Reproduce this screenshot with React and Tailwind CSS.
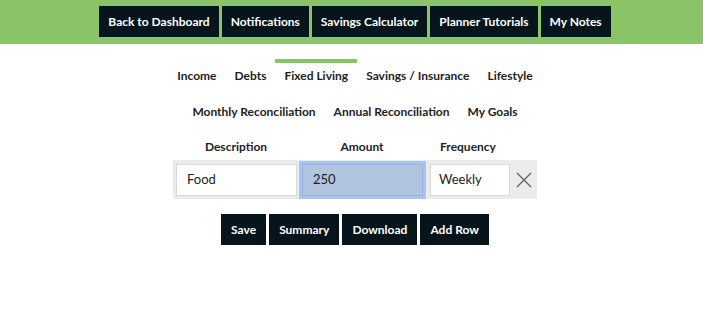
import React from "react";

const navBtn = "bg-[#06141b] text-white text-[12px] font-bold h-[31px] px-[9px] flex items-center whitespace-nowrap";
const actBtn = "bg-[#06141b] text-white text-[12px] font-bold h-[31px] px-[10px] flex items-center whitespace-nowrap";

export default function App() {
  const tabs1 = ["Income", "Debts", "Fixed Living", "Savings / Insurance", "Lifestyle"];
  const tabs2 = ["Monthly Reconciliation", "Annual Reconciliation", "My Goals"];
  const Tab = ({ label, active }) => (
    <div
      className={`px-[9px] pt-[3px] pb-[9px] h-[36px] border-t-4 text-[12px] font-bold text-[#222] leading-[20px] whitespace-nowrap ${
        active ? "border-[#8bc466]" : "border-transparent"
      }`}
    >
      {label}
    </div>
  );
  return (
    <div className="w-[703px] h-[324px] bg-white" style={{ fontFamily: "Lato, 'Open Sans', sans-serif" }}>
      <div className="bg-[#8bc466] h-[44px] flex justify-center items-start pt-[6px] gap-[3px] pl-[7px]">
        <div className={navBtn}>Back to Dashboard</div>
        <div className={navBtn}>Notifications</div>
        <div className={navBtn}>Savings Calculator</div>
        <div className={navBtn}>Planner Tutorials</div>
        <div className={navBtn}>My Notes</div>
      </div>
      <div className="flex justify-center pl-[7px]">
        <div className="flex flex-col items-center">
          <div className="flex justify-center mt-[15px]">
            {tabs1.map((t) => (
              <Tab key={t} label={t} active={t === "Fixed Living"} />
            ))}
          </div>
          <div className="flex justify-center">
            {tabs2.map((t) => (
              <Tab key={t} label={t} />
            ))}
          </div>
          <div className="w-[364px] flex mt-[4px] text-[12px] font-bold text-[#222] h-[24px] items-center">
            <div className="w-[126px] text-center">Description</div>
            <div className="w-[126px] text-center">Amount</div>
            <div className="w-[86px] text-center">Frequency</div>
          </div>
          <div className="w-[364px] h-[39px] mt-[1px] bg-[#ebebeb] flex items-center pl-[3px] gap-0">
            <div className="w-[121px] h-[32px] bg-white border border-[#d9d9d9] flex items-center px-[10px] text-[13px] text-[#222]">
              Food
            </div>
            <div className="ml-[5px] w-[121px] h-[32px] bg-[#b0c4de] border border-[#8fb3e6] ring-[3px] ring-[#a9c5ee] flex items-center px-[10px] text-[13px] text-[#222]">
              250
            </div>
            <div className="ml-[7px] w-[80px] h-[32px] bg-white border border-[#d9d9d9] flex items-center px-[8px] text-[13px] text-[#222]">
              Weekly
            </div>
            <div className="ml-[5px] w-[18px] h-[18px] flex items-center justify-center">
              <svg width="16" height="16" viewBox="0 0 16 16" fill="none" stroke="#666" strokeWidth="1.4">
                <path d="M1 1 L15 15 M15 1 L1 15" />
              </svg>
            </div>
          </div>
          <div className="flex justify-center gap-[3px] mt-[15px]">
            <div className={actBtn}>Save</div>
            <div className={actBtn}>Summary</div>
            <div className={actBtn}>Download</div>
            <div className={actBtn}>Add Row</div>
          </div>
        </div>
      </div>
    </div>
  );
}
